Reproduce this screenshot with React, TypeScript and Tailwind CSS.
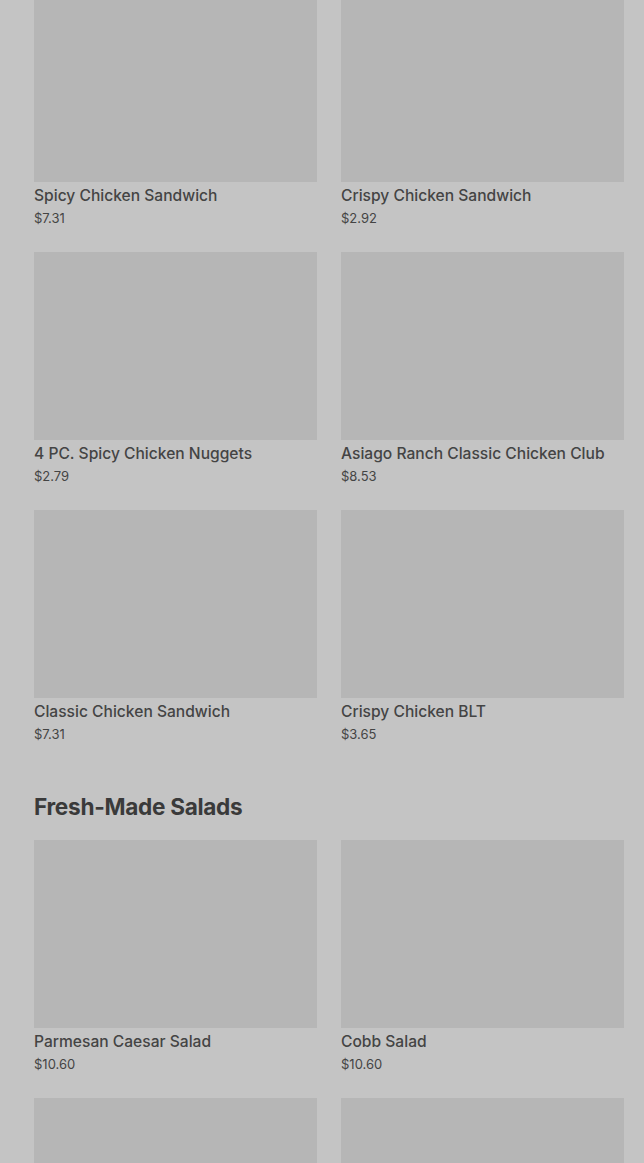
import React from "react";

type Item = { name?: string; price?: string };

const chicken: Item[] = [
  { name: "Spicy Chicken Sandwich", price: "$7.31" },
  { name: "Crispy Chicken Sandwich", price: "$2.92" },
  { name: "4 PC. Spicy Chicken Nuggets", price: "$2.79" },
  { name: "Asiago Ranch Classic Chicken Club", price: "$8.53" },
  { name: "Classic Chicken Sandwich", price: "$7.31" },
  { name: "Crispy Chicken BLT", price: "$3.65" },
];

// last row sits below the fold, only the images show
const salads: Item[] = [
  { name: "Parmesan Caesar Salad", price: "$10.60" },
  { name: "Cobb Salad", price: "$10.60" },
  {},
  {},
];

const Card = ({ item }: { item: Item }) => (
  <div className="flex flex-col pb-6">
    <div className="h-[188px] bg-[#b6b6b6]" />
    {item.name && (
      <>
        <p className="pt-[2px] text-[15.6px] leading-6 font-medium text-[#444] whitespace-nowrap">{item.name}</p>
        <p className="text-[13px] leading-5 text-[#444]">{item.price}</p>
      </>
    )}
  </div>
);

export default function App() {
  return (
    <div className="h-[1163px] overflow-hidden bg-[#c4c4c4] pl-[34px] pr-[20px]" style={{ fontFamily: "Inter, 'Noto Sans', sans-serif" }}>
      <div className="-mt-[6px] grid grid-cols-2 gap-x-6">
        {chicken.map((it, i) => (
          <Card key={i} item={it} />
        ))}
      </div>
      <h2 className="mt-[25px] mb-[19px] text-[22.6px] leading-7 font-bold tracking-[-0.3px] text-[#3a3a3a]">Fresh-Made Salads</h2>
      <div className="grid grid-cols-2 gap-x-6">
        {salads.map((it, i) => (
          <Card key={i} item={it} />
        ))}
      </div>
    </div>
  );
}
